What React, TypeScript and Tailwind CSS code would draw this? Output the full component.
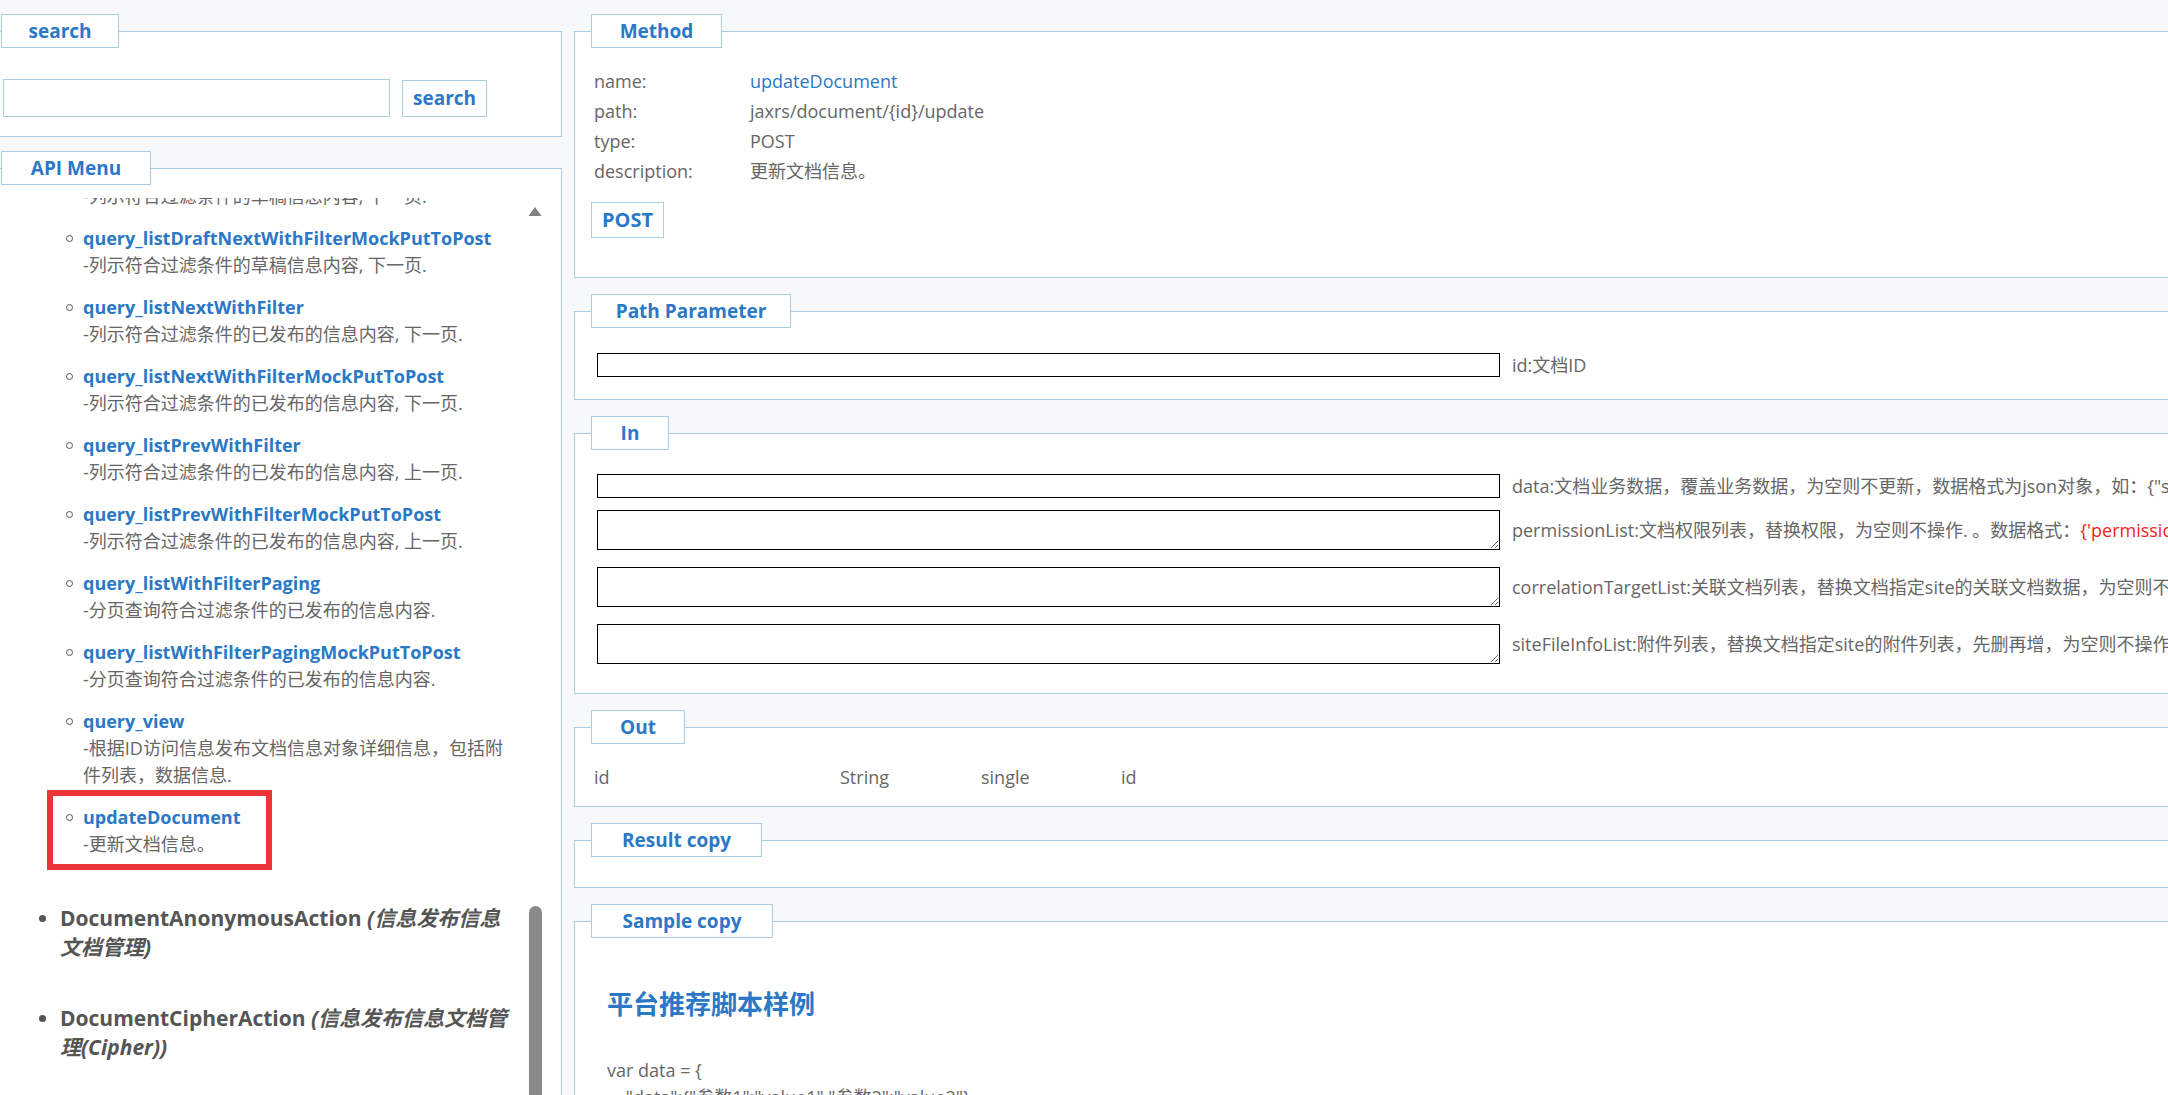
import React from 'react'

const menuItems: { name: string; desc: React.ReactNode; mark?: boolean }[] = [
    { name: 'query_listDraftNextWithFilterMockPutToPost', desc: '-列示符合过滤条件的草稿信息内容, 下一页.' },
    { name: 'query_listNextWithFilter', desc: '-列示符合过滤条件的已发布的信息内容, 下一页.' },
    { name: 'query_listNextWithFilterMockPutToPost', desc: '-列示符合过滤条件的已发布的信息内容, 下一页.' },
    { name: 'query_listPrevWithFilter', desc: '-列示符合过滤条件的已发布的信息内容, 上一页.' },
    { name: 'query_listPrevWithFilterMockPutToPost', desc: '-列示符合过滤条件的已发布的信息内容, 上一页.' },
    { name: 'query_listWithFilterPaging', desc: '-分页查询符合过滤条件的已发布的信息内容.' },
    { name: 'query_listWithFilterPagingMockPutToPost', desc: '-分页查询符合过滤条件的已发布的信息内容.' },
    { name: 'query_view', desc: <>-根据ID访问信息发布文档信息对象详细信息，包括附<br />件列表，数据信息.</> },
    { name: 'updateDocument', desc: '-更新文档信息。', mark: true },
]

const inRows: { h: string; mt: string; text: React.ReactNode }[] = [
    { h: 'input', mt: 'mt-0', text: <>data:文档业务数据，覆盖业务数据，为空则不更新，数据格式为json对象，如：{'{"subject":"文档标题","summary":"摘要"}'}</> },
    { h: 'area', mt: 'mt-[11px]', text: <>permissionList:文档权限列表，替换权限，为空则不操作. 。数据格式：<span className="text-[#f01e1e]">{"{'permissionList':[{'permissionObjectType':'组织','permissionObjectCode':'组织全称'}]}"}</span></> },
    { h: 'area', mt: 'mt-[17px]', text: 'correlationTargetList:关联文档列表，替换文档指定site的关联文档数据，为空则不操作。' },
    { h: 'area', mt: 'mt-[17px]', text: 'siteFileInfoList:附件列表，替换文档指定site的附件列表，先删再增，为空则不操作。' },
]

function Legend({ className, children }: { className: string; children: React.ReactNode }) {
    return (
        <legend className={`h-[34px] border border-[#aacde6] bg-white ${className}`}>
            <span className="block text-center leading-[32px] text-[19px] font-bold text-[#2a78c6]">{children}</span>
        </legend>
    )
}

export default function App() {
    return (
        <div className="w-[2168px] h-[1095px] overflow-hidden bg-[#f7f8fa] flex font-['Open_Sans','Noto_Sans_CJK_SC',sans-serif] text-[18px] text-[#666]">
            {/* left column */}
            <div className="w-[562px] shrink-0 flex flex-col pt-[14px]">
                <fieldset className="border border-l-0 border-[#aacde6] bg-white pb-[19px] text-left">
                    <Legend className="ml-[1px] w-[118px]">search</Legend>
                    <div className="flex items-center gap-[12px] pl-[3px] pt-[31px]">
                        <input type="text" className="w-[387px] h-[38px] border border-[#aacde6] bg-white outline-none" />
                        <button className="w-[85px] h-[37px] border border-[#aacde6] bg-white text-[19px] font-bold text-[#2a78c6]">search</button>
                    </div>
                </fieldset>

                <fieldset className="mt-[14px] border border-l-0 border-[#aacde6] bg-white text-left">
                    <Legend className="ml-[1px] w-[150px]">API Menu</Legend>
                    <div className="flex mt-[13px] h-[910px]">
                        <div className="w-[527px] overflow-hidden">
                            <ul className="mt-[-15px]">
                                <li className="flex mb-[15px]">
                                    <div className="w-[83px] shrink-0" />
                                    <div className="leading-[27px] whitespace-nowrap">-列示符合过滤条件的草稿信息内容, 下一页.</div>
                                </li>
                                {menuItems.map((m) => (
                                    <li key={m.name} className="relative flex mb-[15px]">
                                        <div className="w-[83px] shrink-0 flex justify-end pr-[10px] pt-[10px]">
                                            <span className="w-[7px] h-[7px] rounded-full border border-[#555]" />
                                        </div>
                                        <div className="w-[440px] whitespace-nowrap">
                                            <div className="font-bold text-[#2a78c6] leading-[27px]">{m.name}</div>
                                            <div className="leading-[27px]">{m.desc}</div>
                                        </div>
                                        {m.mark && (
                                            <div className="absolute top-[-14px] left-[47px] w-[225px] h-[80px] border-[6px] border-[#ee3338]" />
                                        )}
                                    </li>
                                ))}
                            </ul>
                            <ul className="mt-[46px] text-[21px] font-bold leading-[29px] text-[#555]">
                                <li className="flex mb-[42px]">
                                    <div className="w-[60px] shrink-0 flex justify-end pr-[14px] pt-[11px]">
                                        <span className="w-[7px] h-[7px] rounded-full bg-[#555]" />
                                    </div>
                                    <div className="whitespace-nowrap">
                                        DocumentAnonymousAction <i>(信息发布信息<br />文档管理)</i>
                                    </div>
                                </li>
                                <li className="flex mb-[42px]">
                                    <div className="w-[60px] shrink-0 flex justify-end pr-[14px] pt-[11px]">
                                        <span className="w-[7px] h-[7px] rounded-full bg-[#555]" />
                                    </div>
                                    <div className="whitespace-nowrap">
                                        DocumentCipherAction <i>(信息发布信息文档管<br />理(Cipher))</i>
                                    </div>
                                </li>
                            </ul>
                        </div>
                        <div className="w-[16px] flex flex-col items-center">
                            <svg width="16" height="11" viewBox="0 0 16 11" className="mt-[9px]">
                                <polygon points="8,0 16,11 0,11" fill="#808080" />
                            </svg>
                            <div className="mt-[690px] w-[13px] h-[240px] rounded-full bg-[#8a8a8a]" />
                        </div>
                    </div>
                </fieldset>
            </div>

            {/* right column */}
            <div className="ml-[12px] w-[1700px] shrink-0 flex flex-col pt-[14px]">
                <fieldset className="border border-[#aacde6] bg-white text-left">
                    <Legend className="ml-[16px] w-[131px]">Method</Legend>
                    <div className="pl-[19px] pt-[18px] leading-[30px]">
                        <div className="flex"><span className="w-[156px]">name:</span><span className="text-[#2a78c6]">updateDocument</span></div>
                        <div className="flex"><span className="w-[156px]">path:</span><span>jaxrs/document/{'{id}'}/update</span></div>
                        <div className="flex"><span className="w-[156px]">type:</span><span>POST</span></div>
                        <div className="flex"><span className="w-[156px]">description:</span><span>更新文档信息。</span></div>
                    </div>
                    <div className="pl-[16px] mt-[16px] pb-[39px]">
                        <button className="w-[73px] h-[36px] border border-[#aacde6] bg-white text-[20px] font-bold text-[#2a78c6]">POST</button>
                    </div>
                </fieldset>

                <fieldset className="mt-[16px] border border-[#aacde6] bg-white text-left">
                    <Legend className="ml-[16px] w-[200px]">Path Parameter</Legend>
                    <div className="flex items-center pl-[22px] pt-[24px] pb-[21px]">
                        <input type="text" className="w-[903px] h-[24px] border border-black bg-white outline-none" />
                        <span className="ml-[12px] leading-[26px]">id:文档ID</span>
                    </div>
                </fieldset>

                <fieldset className="mt-[16px] border border-[#aacde6] bg-white text-left">
                    <Legend className="ml-[16px] w-[78px]">In</Legend>
                    <div className="pl-[22px] pt-[23px] pb-[29px]">
                        {inRows.map((r, i) => (
                            <div key={i} className={`flex items-center ${r.mt}`}>
                                {r.h === 'input' ? (
                                    <input type="text" className="w-[903px] h-[24px] shrink-0 border border-black bg-white outline-none" />
                                ) : (
                                    <textarea className="w-[903px] h-[40px] shrink-0 border border-black bg-white outline-none block" />
                                )}
                                <span className="ml-[12px] whitespace-nowrap leading-[26px]">{r.text}</span>
                            </div>
                        ))}
                    </div>
                </fieldset>

                <fieldset className="mt-[16px] border border-[#aacde6] bg-white text-left">
                    <Legend className="ml-[16px] w-[94px]">Out</Legend>
                    <div className="flex pl-[19px] pt-[20px] pb-[16px] leading-[26px]">
                        <span className="w-[246px]">id</span>
                        <span className="w-[141px]">String</span>
                        <span className="w-[140px]">single</span>
                        <span>id</span>
                    </div>
                </fieldset>

                <fieldset className="mt-[16px] border border-[#aacde6] bg-white text-left">
                    <Legend className="ml-[16px] w-[171px]">Result copy</Legend>
                    <div className="h-[30px]" />
                </fieldset>

                <fieldset className="mt-[16px] border border-[#aacde6] bg-white text-left">
                    <Legend className="ml-[16px] w-[182px]">Sample copy</Legend>
                    <div className="pl-[32px] h-[300px]">
                        <h2 className="mt-[48px] text-[26px] font-bold leading-[36px] text-[#2a78c6]">平台推荐脚本样例</h2>
                        <div className="mt-[35px] leading-[27px] whitespace-pre">
                            <div>var data = {'{'}</div>
                            <div>{'    "data":{"参数1":"value1","参数2":"value2"},'}</div>
                        </div>
                    </div>
                </fieldset>
            </div>
        </div>
    )
}
